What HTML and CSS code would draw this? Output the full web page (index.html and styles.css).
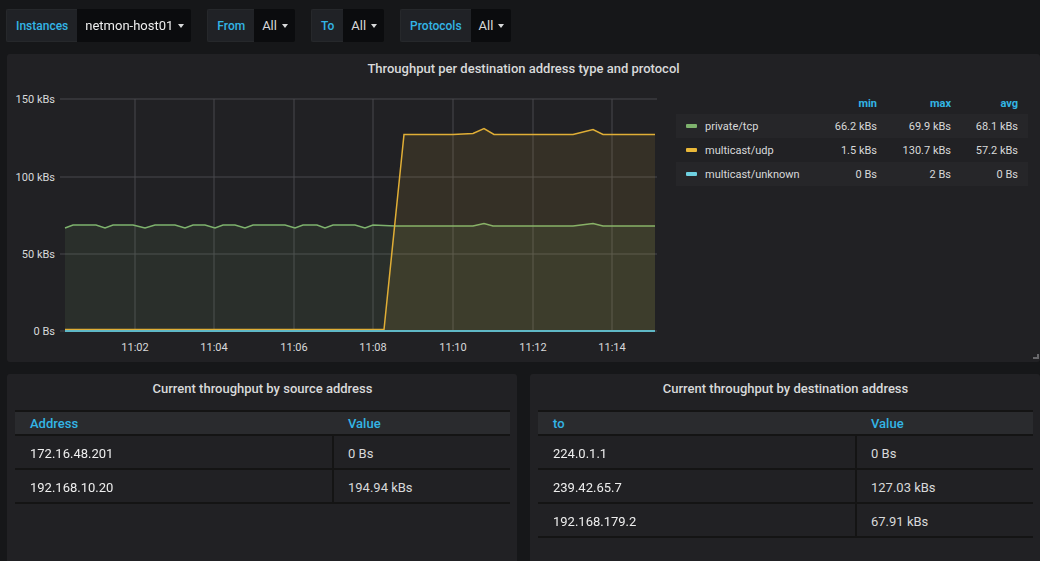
FILE: index.html
```html
<!DOCTYPE html>
<html>
<head>
<meta charset="utf-8">
<link rel="stylesheet" href="styles.css">
</head>
<body>
<div class="toolbar">
  <div class="var"><span class="var-label">Instances</span><span class="var-value"><span class="blur">netmon-host01</span><i class="caret"></i></span></div>
  <div class="var"><span class="var-label">From</span><span class="var-value">All<i class="caret"></i></span></div>
  <div class="var"><span class="var-label">To</span><span class="var-value">All<i class="caret"></i></span></div>
  <div class="var"><span class="var-label">Protocols</span><span class="var-value">All<i class="caret"></i></span></div>
</div>

<div class="main">
  <div class="panel graph-panel">
    <div class="panel-title">Throughput per destination address type and protocol</div>
    <div class="graph-body">
      <svg class="chart" width="655" height="274" viewBox="0 0 655 274">
        <g class="grid">
          <line x1="53" y1="13" x2="650" y2="13"/>
          <line x1="53" y1="91" x2="650" y2="91"/>
          <line x1="53" y1="168" x2="650" y2="168"/>
          <line x1="53" y1="245" x2="650" y2="245"/>
          <line x1="128" y1="13" x2="128" y2="245"/>
          <line x1="207" y1="13" x2="207" y2="245"/>
          <line x1="287" y1="13" x2="287" y2="245"/>
          <line x1="366" y1="13" x2="366" y2="245"/>
          <line x1="446" y1="13" x2="446" y2="245"/>
          <line x1="526" y1="13" x2="526" y2="245"/>
          <line x1="605" y1="13" x2="605" y2="245"/>
        </g>
        <g class="ylabels">
          <text x="48" y="17">150 kBs</text>
          <text x="48" y="95">100 kBs</text>
          <text x="48" y="172">50 kBs</text>
          <text x="48" y="249">0 Bs</text>
        </g>
        <g class="xlabels">
          <text x="128" y="265">11:02</text>
          <text x="207" y="265">11:04</text>
          <text x="287" y="265">11:06</text>
          <text x="366" y="265">11:08</text>
          <text x="446" y="265">11:10</text>
          <text x="526" y="265">11:12</text>
          <text x="605" y="265">11:14</text>
        </g>
        <path fill="rgba(126,178,109,0.1)" d="M58,142 L66,139 L89,139 L98,142 L106,139 L126,139 L138,142 L148,139 L168,139 L178,142 L186,139 L198,139 L208,142 L216,139 L228,139 L238,142 L246,139 L278,139 L288,142 L296,139 L310,139 L318,142 L326,139 L348,139 L358,142 L366,139 L388,140 L466,140 L477,137.5 L486,140 L566,140 L586,137.5 L596,140 L648,140 L648,245 L58,245 Z"/>
        <path fill="none" stroke="#7eb26d" stroke-width="1.5" d="M58,142 L66,139 L89,139 L98,142 L106,139 L126,139 L138,142 L148,139 L168,139 L178,142 L186,139 L198,139 L208,142 L216,139 L228,139 L238,142 L246,139 L278,139 L288,142 L296,139 L310,139 L318,142 L326,139 L348,139 L358,142 L366,139 L388,140 L466,140 L477,137.5 L486,140 L566,140 L586,137.5 L596,140 L648,140"/>
        <path fill="rgba(234,184,57,0.1)" d="M58,243.5 L377,243.5 L397,48.5 L446,48.5 L466,47.5 L477,42.5 L487,48.5 L566,48.5 L586,43.5 L596,48.5 L648,48.5 L648,245 L58,245 Z"/>
        <path fill="none" stroke="#e0ae36" stroke-width="1.5" d="M58,243.5 L377,243.5 L397,48.5 L446,48.5 L466,47.5 L477,42.5 L487,48.5 L566,48.5 L586,43.5 L596,48.5 L648,48.5"/>
        <path fill="none" stroke="#5fb8c6" stroke-width="1.8" d="M58,245 L648,245"/>
      </svg>
      <div class="legend">
        <div class="legend-head"><span class="c-min">min</span><span class="c-max">max</span><span class="c-avg">avg</span></div>
        <div class="legend-row odd"><i class="swatch green"></i><span class="l-name">private/tcp</span><span class="c-min">66.2 kBs</span><span class="c-max">69.9 kBs</span><span class="c-avg">68.1 kBs</span></div>
        <div class="legend-row"><i class="swatch yellow"></i><span class="l-name">multicast/udp</span><span class="c-min">1.5 kBs</span><span class="c-max">130.7 kBs</span><span class="c-avg">57.2 kBs</span></div>
        <div class="legend-row odd"><i class="swatch cyan"></i><span class="l-name">multicast/unknown</span><span class="c-min">0 Bs</span><span class="c-max">2 Bs</span><span class="c-avg">0 Bs</span></div>
      </div>
    </div>
    <span class="resize"></span>
  </div>

  <div class="row">
    <div class="panel table-panel">
      <div class="panel-title tp-title">Current throughput by source address</div>
      <div class="tbl">
        <div class="tbl-head"><span class="th c1">Address</span><span class="th c2">Value</span></div>
        <div class="tbl-row"><span class="td c1"><span class="blur">172.16.48.201</span></span><span class="td c2">0 Bs</span></div>
        <div class="tbl-row"><span class="td c1"><span class="blur">192.168.10.20</span></span><span class="td c2">194.94 kBs</span></div>
      </div>
    </div>
    <div class="panel table-panel">
      <div class="panel-title tp-title">Current throughput by destination address</div>
      <div class="tbl">
        <div class="tbl-head"><span class="th c1">to</span><span class="th c2">Value</span></div>
        <div class="tbl-row"><span class="td c1"><span class="blur">224.0.1.1</span></span><span class="td c2">0 Bs</span></div>
        <div class="tbl-row"><span class="td c1"><span class="blur">239.42.65.7</span></span><span class="td c2">127.03 kBs</span></div>
        <div class="tbl-row"><span class="td c1"><span class="blur">192.168.179.2</span></span><span class="td c2">67.91 kBs</span></div>
      </div>
    </div>
  </div>
</div>
</body>
</html>
```

FILE: styles.css
```css
html, body {
  margin: 0;
  padding: 0;
}
body {
  background: #161719;
  color: #d8d9da;
  font-family: Roboto, "Liberation Sans", sans-serif;
  width: 1040px;
  height: 561px;
  overflow: hidden;
}

/* toolbar */
.toolbar {
  display: flex;
  gap: 16px;
  padding: 9px 0 0 6px;
  height: 33px;
}
.var {
  display: flex;
  height: 33px;
}
.var-label {
  display: flex;
  align-items: center;
  padding: 0 9px;
  background: #202226;
  border: 1px solid #26282b;
  border-right: none;
  border-radius: 2px 0 0 2px;
  color: #33b5e5;
  font-size: 12px;
  font-weight: 500;
}
.var-value {
  display: flex;
  align-items: center;
  padding: 0 7px 0 8px;
  background: #0b0c0e;
  border-radius: 0 2px 2px 0;
  font-size: 13px;
  color: #d8d9da;
}
.caret {
  display: inline-block;
  width: 0;
  height: 0;
  margin-left: 5px;
  border-left: 3.5px solid transparent;
  border-right: 3.5px solid transparent;
  border-top: 4px solid #d8d9da;
}
.blur {
  display: inline-block;
  filter: blur(0.7px);
  color: #eeeeee;
}

/* layout */
.main {
  padding-left: 7px;
  margin-top: 12px;
}
.panel {
  background: #212124;
  border-radius: 3px;
  position: relative;
}
.graph-panel {
  height: 308px;
}
.panel-title {
  height: 32px;
  box-sizing: border-box;
  padding-top: 7px;
  line-height: 16px;
  text-align: center;
  font-size: 13px;
  font-weight: 500;
  color: #d8d9da;
}
.graph-body {
  display: flex;
}
.chart {
  display: block;
  flex: none;
}
.grid line {
  stroke: #48494c;
  stroke-width: 1;
}
.ylabels text {
  fill: #d8d9da;
  font-size: 11px;
  text-anchor: end;
  font-family: Roboto, "Liberation Sans", sans-serif;
}
.xlabels text {
  fill: #d8d9da;
  font-size: 11px;
  text-anchor: middle;
  font-family: Roboto, "Liberation Sans", sans-serif;
}

/* legend */
.legend {
  width: 352px;
  margin-left: 14px;
  padding-top: 12px;
  font-size: 11px;
}
.legend-head {
  display: flex;
  justify-content: flex-end;
  height: 16px;
  line-height: 12px;
  padding-right: 10px;
  color: #33b5e5;
  font-size: 11px;
  font-weight: 700;
}
.legend-row {
  display: flex;
  align-items: center;
  height: 24px;
  padding: 0 10px;
}
.legend-row.odd {
  background: #262629;
}
.c-min, .c-max, .c-avg {
  text-align: right;
  flex: none;
}
.c-min { width: 70px; }
.c-max { width: 74px; }
.c-avg { width: 67px; }
.l-name {
  flex: 1;
}
.swatch {
  display: inline-block;
  width: 11px;
  height: 4px;
  border-radius: 1px;
  margin-right: 8px;
}
.swatch.green { background: #7eb26d; }
.swatch.yellow { background: #eab839; }
.swatch.cyan { background: #6ed0e0; }

.resize {
  position: absolute;
  right: 1px;
  bottom: 3px;
  width: 4px;
  height: 3px;
  border-right: 2px solid #68686b;
  border-bottom: 2px solid #68686b;
}

/* tables */
.row {
  display: flex;
  gap: 13px;
  margin-top: 12px;
}
.table-panel {
  width: 510px;
  height: 200px;
  box-sizing: border-box;
  padding: 0 7px 0 8px;
}
.tp-title {
  height: 36px;
  padding-top: 7px;
}
.tbl-head, .tbl-row {
  display: grid;
  grid-template-columns: 319px 1fr;
  box-sizing: border-box;
}
.tbl-head {
  height: 26px;
  background: #2a2b2e;
  border-top: 2px solid #141414;
  border-bottom: 2px solid #141414;
  align-items: center;
}
.th {
  color: #33b5e5;
  font-size: 13px;
  font-weight: 500;
}
.tbl-row {
  height: 34px;
  border-bottom: 2px solid #141414;
}
.td {
  display: flex;
  align-items: center;
  font-size: 13px;
  color: #d8d9da;
  padding-top: 3px;
}
.c1 {
  padding-left: 15px;
  box-sizing: border-box;
}
.td.c1 {
  border-right: 2px solid #141414;
}
.c2 {
  padding-left: 14px;
}
```
